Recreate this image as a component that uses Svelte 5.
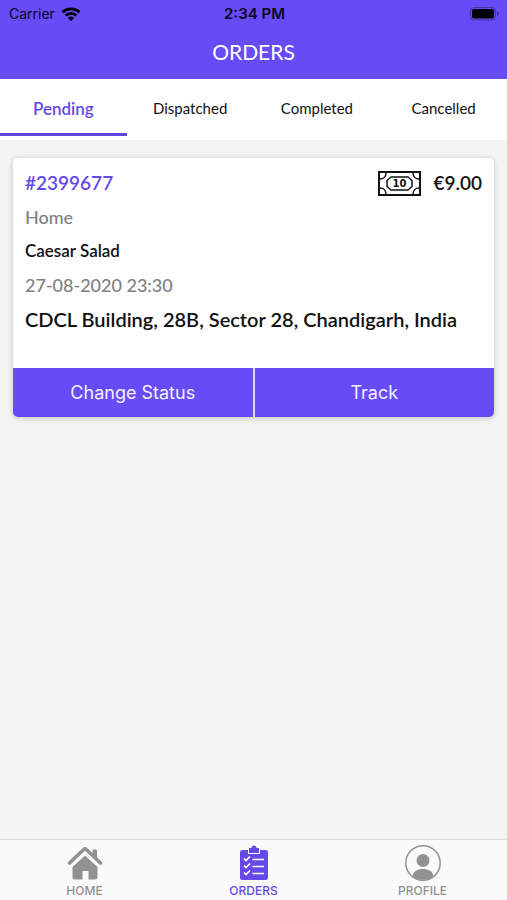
<script>
	let active = 'Pending';

	const tabs = ['Pending', 'Dispatched', 'Completed', 'Cancelled'];

	const order = {
		id: '#2399677',
		price: '€9.00',
		place: 'Home',
		items: 'Caesar Salad',
		date: '27-08-2020 23:30',
		address: 'CDCL Building, 28B, Sector 28, Chandigarh, India'
	};
</script>

<div class="screen">
	<header>
		<div class="status">
			<span class="carrier">
				Carrier
				<svg width="20" height="14" viewBox="0 0 20 14" fill="none" stroke="#000" stroke-width="2.8">
					<path d="M1.500 5.200a12.400 12.400 0 0 1 17 0" />
					<path d="M4.700 8.600a7.600 7.600 0 0 1 10.600 0" />
					<path d="M10 14 6.800 10.900a4.600 4.600 0 0 1 6.400 0z" fill="#000" stroke="none" />
				</svg>
			</span>
			<span class="time">2:34 PM</span>
			<svg class="battery" width="30" height="14" viewBox="0 0 30 14">
				<rect x="0.500" y="0.500" width="25" height="12.500" rx="3.500" fill="none" stroke="#000" stroke-opacity="0.35" />
				<rect x="2" y="2" width="22" height="9.500" rx="2" />
				<path d="M27 4.500c2.400 1 2.400 3.600 0 4.500z" fill-opacity="0.4" />
			</svg>
		</div>
		<h1>ORDERS</h1>
	</header>

	<nav class="tabs">
		{#each tabs as tab}
			<button class="tab" class:active={active === tab} on:click={() => (active = tab)}>{tab}</button>
		{/each}
	</nav>

	<main>
		<article class="card">
			<div class="details">
				<div class="top">
					<a href="#order">{order.id}</a>
					<span class="price">
						<svg width="43" height="25" viewBox="0 0 43 25" fill="none" stroke="#111" stroke-width="1.500">
							<rect x="1" y="1" width="41" height="23" stroke-width="2" />
							<path d="M8 2c0 3.500-2.500 6-6 6M35 2c0 3.500 2.500 6 6 6M8 23c0-3.500-2.500-6-6-6M35 23c0-3.500 2.500-6 6-6" />
							<path d="M13 6h17l4 3.500v6L30 19H13l-4-3.500v-6z" stroke-linejoin="round" />
							<text x="21.500" y="16" text-anchor="middle">10</text>
						</svg>
						{order.price}
					</span>
				</div>
				<p class="muted">{order.place}</p>
				<p class="items">{order.items}</p>
				<p class="muted">{order.date}</p>
				<p class="address">{order.address}</p>
			</div>
			<div class="actions">
				<button>Change Status</button>
				<button>Track</button>
			</div>
		</article>
	</main>

	<nav class="bottom">
		<a href="#home">
			<svg width="36" height="36" viewBox="0 0 36 36" fill="currentColor">
				<path d="M2.500 18 16.500 4.700q1.500-1.400 3 0L33.500 18" fill="none" stroke="currentColor" stroke-width="3.600" stroke-linecap="round" stroke-linejoin="round" />
				<path d="M25.500 5.500a1 1 0 0 1 1-1h2.500a1 1 0 0 1 1 1v10l-4.500-4z" />
				<path d="m18 10.500 12.500 11.500v10a2.500 2.500 0 0 1-2.500 2.500h-6.500v-8.500h-6v8.500H8A2.500 2.500 0 0 1 5.500 32V22z" />
			</svg>
			HOME
		</a>
		<a href="#orders" class="current">
			<svg width="36" height="36" viewBox="0 0 36 36">
				<path d="M6.500 5H12v4h12V5h5.500A2.500 2.500 0 0 1 32 7.500v25a2.500 2.500 0 0 1-2.500 2.500h-23A2.500 2.500 0 0 1 4 32.500v-25A2.500 2.500 0 0 1 6.500 5z" fill="currentColor" />
				<path d="M13 3h2.500a2.500 2.500 0 0 1 5 0H23v5H13z" fill="currentColor" />
				<path d="m8 13.500 2 2 4-4M8 20.500l2 2 4-4M8 27.500l2 2 4-4M16.500 14.500H28M16.500 21.500H28M16.500 28.500H28" fill="none" stroke="#fff" stroke-width="1.600" />
			</svg>
			ORDERS
		</a>
		<a href="#profile">
			<svg width="36" height="36" viewBox="0 0 36 36" fill="currentColor">
				<circle cx="18" cy="18" r="17.200" fill="none" stroke="currentColor" stroke-width="1.500" />
				<circle cx="18" cy="15.500" r="6.500" />
				<path d="M7.500 31c1-5 5-7 10.500-7s9.500 2 10.500 7c-6 5-15 5-21 0z" />
			</svg>
			PROFILE
		</a>
	</nav>
</div>

<style>
	:global(body) {
		margin: 0;
		background: #f4f4f4;
	}
	.screen {
		min-height: 100vh;
		display: flex;
		flex-direction: column;
		font-family: Lato, sans-serif;
		color: #111;
	}
	svg {
		display: block;
		flex: none;
	}
	button {
		border: 0;
		padding: 0;
		background: none;
		color: inherit;
		font: inherit;
		cursor: pointer;
	}
	a {
		color: inherit;
		text-decoration: none;
	}
	header {
		background: #674bf6;
	}
	.status {
		display: grid;
		grid-template-columns: 1fr auto 1fr;
		align-items: center;
		height: 27px;
		padding: 0 7px 0 9px;
		font: 14px Inter, sans-serif;
		color: #0c0524;
	}
	.carrier {
		display: flex;
		align-items: center;
		gap: 6px;
	}
	.time {
		font-size: 15px;
		font-weight: 600;
	}
	.battery {
		justify-self: end;
	}
	h1 {
		margin: 0;
		padding-bottom: 2px;
		line-height: 50px;
		font-size: 21px;
		font-weight: 400;
		text-align: center;
		color: #fff;
	}
	.tabs {
		display: grid;
		grid-template-columns: repeat(4, 1fr);
		background: #fff;
		padding-bottom: 4px;
	}
	.tab {
		height: 57px;
		border-top: 4px solid transparent;
		border-bottom: 3px solid transparent;
		font-size: 15px;
	}
	.tab.active {
		border-bottom-color: #5f44e4;
		font-size: 17px;
		font-weight: 600;
		color: #6549e8;
	}
	main {
		flex: 1;
		padding: 18px 13px;
	}
	.card {
		border-radius: 5px;
		background: #fff;
		box-shadow: 0 1px 6px rgba(0, 0, 0, 0.2);
		overflow: hidden;
	}
	.details {
		padding: 8px 12px 32px;
		font-size: 18px;
		line-height: 34px;
		font-weight: 500;
	}
	.top,
	.price {
		display: flex;
		align-items: center;
	}
	.top {
		justify-content: space-between;
		font-size: 19px;
		font-weight: 600;
	}
	.top a {
		color: #6549e8;
	}
	.price {
		gap: 12px;
	}
	.price text {
		fill: #111;
		stroke: none;
		font: bold 10px "DejaVu Sans", sans-serif;
	}
	p {
		margin: 0;
	}
	.muted {
		color: #808080;
	}
	.items {
		font-size: 17px;
		font-weight: 600;
	}
	.address {
		font-size: 20px;
		font-weight: 600;
	}
	.actions {
		display: grid;
		grid-template-columns: 1fr 1fr;
		gap: 2px;
		background: #ddd8fa;
	}
	.actions button {
		height: 49px;
		background: #674bf6;
		color: #f4f0ff;
		font: 18px Inter, sans-serif;
	}
	.bottom {
		display: grid;
		grid-template-columns: repeat(3, 1fr);
		border-top: 1px solid #d8d8d8;
		background: #fafafa;
	}
	.bottom a {
		display: flex;
		flex-direction: column;
		align-items: center;
		gap: 2px;
		padding: 5px 0 1px;
		font: 500 12px/16px Inter, sans-serif;
		color: #919191;
	}
	.bottom .current {
		color: #6549e8;
	}
</style>
